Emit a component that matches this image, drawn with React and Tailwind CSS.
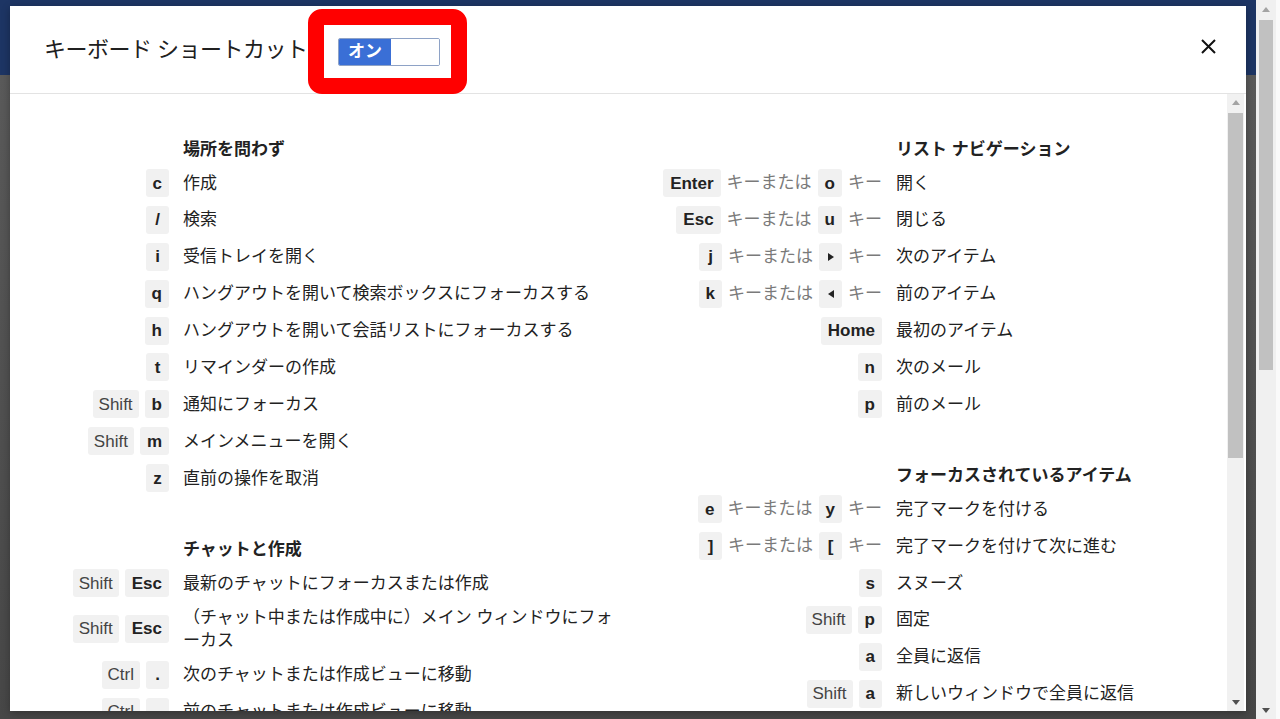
import React from 'react';

const F = "font-['Liberation_Sans','Noto_Sans_CJK_JP',sans-serif]";

function Key({ children, mod }) {
  return (
    <span
      className={
        mod
          ? 'inline-flex h-[28px] min-w-[23px] items-center justify-center rounded-[3px] bg-[#f1f1f1] px-[6px] text-[17px] font-normal leading-none text-[#444]'
          : 'inline-flex h-[28px] min-w-[23px] items-center justify-center rounded-[3px] bg-[#f1f1f1] px-[7px] text-[17px] font-bold leading-none text-[#222]'
      }
    >
      {children}
    </span>
  );
}

function Or() {
  return <span className="text-[17px] leading-[28px] text-[#7a7a7a]">キーまたは</span>;
}
function Ki() {
  return <span className="text-[17px] leading-[28px] text-[#7a7a7a]">キー</span>;
}

function TriR() {
  return (
    <svg width="6" height="8" viewBox="0 0 6 8">
      <path d="M0 0 L6 4 L0 8 Z" fill="#222" />
    </svg>
  );
}
function TriL() {
  return (
    <svg width="6" height="8" viewBox="0 0 6 8">
      <path d="M6 0 L0 4 L6 8 Z" fill="#222" />
    </svg>
  );
}

function Row({ keys, desc, kw }) {
  return (
    <div className="flex min-h-[28px] items-center">
      <div className={kw}>{keys}</div>
      <div className="ml-[14px] text-[17px] leading-[23px] text-[#222]">{desc}</div>
    </div>
  );
}

function Section({ title, kw, children }) {
  return (
    <div className="flex flex-col">
      <div className="flex h-[24px] items-center">
        <div className={kw} />
        <div className="ml-[14px] text-[17px] font-bold leading-[24px] text-[#222]">{title}</div>
      </div>
      <div className="mt-[7px] flex flex-col gap-[8.875px]">{children}</div>
    </div>
  );
}

const LW = 'flex w-[159px] shrink-0 items-center justify-end gap-[6px]';
const RW = 'flex w-[264px] shrink-0 items-center justify-end gap-[6px]';

function LeftColumn() {
  return (
    <div className="flex w-[608px] shrink-0 flex-col gap-[46px]">
      <Section title="場所を問わず" kw={LW}>
        <Row kw={LW} keys={<Key>c</Key>} desc="作成" />
        <Row kw={LW} keys={<Key>/</Key>} desc="検索" />
        <Row kw={LW} keys={<Key>i</Key>} desc="受信トレイを開く" />
        <Row kw={LW} keys={<Key>q</Key>} desc="ハングアウトを開いて検索ボックスにフォーカスする" />
        <Row kw={LW} keys={<Key>h</Key>} desc="ハングアウトを開いて会話リストにフォーカスする" />
        <Row kw={LW} keys={<Key>t</Key>} desc="リマインダーの作成" />
        <Row kw={LW} keys={<><Key mod>Shift</Key><Key>b</Key></>} desc="通知にフォーカス" />
        <Row kw={LW} keys={<><Key mod>Shift</Key><Key>m</Key></>} desc="メインメニューを開く" />
        <Row kw={LW} keys={<Key>z</Key>} desc="直前の操作を取消" />
      </Section>
      <Section title="チャットと作成" kw={LW}>
        <Row kw={LW} keys={<><Key mod>Shift</Key><Key>Esc</Key></>} desc="最新のチャットにフォーカスまたは作成" />
        <Row
          kw={LW}
          keys={<><Key mod>Shift</Key><Key>Esc</Key></>}
          desc={<span className="whitespace-nowrap">（チャット中または作成中に）メイン ウィンドウにフォ<br />ーカス</span>}
        />
        <Row kw={LW} keys={<><Key mod>Ctrl</Key><Key>.</Key></>} desc="次のチャットまたは作成ビューに移動" />
        <Row kw={LW} keys={<><Key mod>Ctrl</Key><Key>,</Key></>} desc="前のチャットまたは作成ビューに移動" />
      </Section>
    </div>
  );
}

function RightColumn() {
  return (
    <div className="flex flex-1 flex-col gap-[46px]">
      <Section title="リスト ナビゲーション" kw={RW}>
        <Row kw={RW} keys={<><Key>Enter</Key><Or /><Key>o</Key><Ki /></>} desc="開く" />
        <Row kw={RW} keys={<><Key>Esc</Key><Or /><Key>u</Key><Ki /></>} desc="閉じる" />
        <Row kw={RW} keys={<><Key>j</Key><Or /><Key><TriR /></Key><Ki /></>} desc="次のアイテム" />
        <Row kw={RW} keys={<><Key>k</Key><Or /><Key><TriL /></Key><Ki /></>} desc="前のアイテム" />
        <Row kw={RW} keys={<Key>Home</Key>} desc="最初のアイテム" />
        <Row kw={RW} keys={<Key>n</Key>} desc="次のメール" />
        <Row kw={RW} keys={<Key>p</Key>} desc="前のメール" />
      </Section>
      <Section title="フォーカスされているアイテム" kw={RW}>
        <Row kw={RW} keys={<><Key>e</Key><Or /><Key>y</Key><Ki /></>} desc="完了マークを付ける" />
        <Row kw={RW} keys={<><Key>]</Key><Or /><Key>[</Key><Ki /></>} desc="完了マークを付けて次に進む" />
        <Row kw={RW} keys={<Key>s</Key>} desc="スヌーズ" />
        <Row kw={RW} keys={<><Key mod>Shift</Key><Key>p</Key></>} desc="固定" />
        <Row kw={RW} keys={<Key>a</Key>} desc="全員に返信" />
        <Row kw={RW} keys={<><Key mod>Shift</Key><Key>a</Key></>} desc="新しいウィンドウで全員に返信" />
      </Section>
    </div>
  );
}

function ArrowUp({ color }) {
  return (
    <svg width="8" height="5" viewBox="0 0 8 5">
      <path d="M0 5 L4 0 L8 5 Z" fill={color} />
    </svg>
  );
}
function ArrowDown({ color }) {
  return (
    <svg width="8" height="5" viewBox="0 0 8 5">
      <path d="M0 0 L8 0 L4 5 Z" fill={color} />
    </svg>
  );
}

export default function App() {
  return (
    <div className={`relative flex h-[719px] w-[1280px] overflow-hidden ${F}`}>
      {/* dimmed page behind */}
      <div className="flex w-[1256px] shrink-0 flex-col">
        <div className="h-[75px] bg-[#1d3564]" />
        <div className="flex-1 bg-gradient-to-b from-[#5a5a5a] to-[#474747]" />
      </div>
      {/* page scrollbar */}
      <div className="flex w-[20px] shrink-0 flex-col bg-[#f0f0f0]">
        <div className="flex h-[18px] items-center justify-center">
          <ArrowUp color="#a3a3a3" />
        </div>
        <div className="mx-[3px] mt-[2px] h-[350px] bg-[#c1c1c1]" />
        <div className="flex-1" />
        <div className="flex h-[18px] items-center justify-center">
          <ArrowDown color="#505050" />
        </div>
      </div>
      <div className="flex-1 bg-[#fafafa]" />

      {/* dialog */}
      <div className="absolute left-[10px] top-[6px] flex h-[705px] w-[1236px] flex-col bg-white shadow-[0_2px_8px_rgba(0,0,0,0.3)]">
        <div className="flex h-[88px] shrink-0 items-center border-b border-[#e3e3e3] pl-[34px]">
          <div className="w-[294px] shrink-0 text-[22px] leading-none tracking-[-0.5px] text-[#202020]">キーボード ショートカット</div>
          <div className="mt-[5px] flex h-[28px] w-[102px] overflow-hidden rounded-[2px] border border-[#8ea2c6]">
            <div className="flex w-[52px] items-center justify-center bg-[#3a6fd6] text-[17px] font-bold text-white">オン</div>
            <div className="flex-1 bg-white" />
          </div>
          <div className="ml-auto mr-[30px] -mt-[6px]">
            <svg width="15" height="15" viewBox="0 0 15 15">
              <path d="M1 1 L14 14 M14 1 L1 14" stroke="#111" strokeWidth="2" />
            </svg>
          </div>
        </div>
        <div className="flex min-h-0 flex-1">
          <div className="flex min-w-0 flex-1 overflow-hidden pt-[44px]">
            <LeftColumn />
            <RightColumn />
          </div>
          <div className="mr-[2px] flex w-[17px] shrink-0 flex-col bg-[#f1f1f1]">
            <div className="flex h-[17px] items-center justify-center">
              <ArrowUp color="#a3a3a3" />
            </div>
            <div className="mx-[1px] mt-[2px] h-[345px] bg-[#c1c1c1]" />
            <div className="flex-1" />
            <div className="flex h-[17px] items-center justify-center">
              <ArrowDown color="#505050" />
            </div>
          </div>
        </div>
      </div>

      {/* red annotation */}
      <div className="absolute left-[308px] top-[9px] h-[85px] w-[159px] rounded-[14px] border-[16px] border-[#ff0000]" />
    </div>
  );
}
